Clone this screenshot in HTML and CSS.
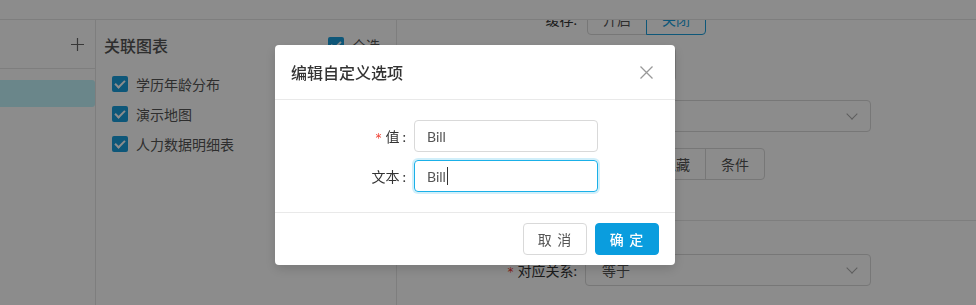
FILE: index.html
```html
<!DOCTYPE html>
<html lang="zh-CN">
<head>
    <meta charset="UTF-8">
    <meta name="viewport" content="width=device-width, initial-scale=1.0">
    <title>编辑自定义选项</title>
    <link rel="stylesheet" href="styles.css">
</head>
<body>
    <div class="app">
        <header class="topbar"></header>

        <div class="main">
            <aside class="side">
                <div class="side-head">
                    <svg class="plus" width="13" height="13" viewBox="0 0 13 13">
                        <path d="M6.5 0v13M0 6.5h13" stroke="#666" stroke-width="1.2" fill="none"/>
                    </svg>
                </div>
                <div class="side-list">
                    <div class="side-item active"></div>
                </div>
            </aside>

            <section class="charts">
                <div class="charts-head">
                    <span class="charts-title">关联图表</span>
                    <label class="check"><span class="box"></span>全选</label>
                </div>
                <ul class="chart-list">
                    <li class="check"><span class="box"></span>学历年龄分布</li>
                    <li class="check"><span class="box"></span>演示地图</li>
                    <li class="check"><span class="box"></span>人力数据明细表</li>
                </ul>
            </section>

            <section class="props">
                <div class="props-inner">
                    <div class="prop-row row-cache">
                        <span class="prop-label">缓存:</span>
                        <div class="btn-group">
                            <span class="seg">开启</span>
                            <span class="seg on">关闭</span>
                        </div>
                    </div>
                    <div class="prop-row row-name">
                        <span class="prop-label"></span>
                        <div class="box-input"></div>
                    </div>
                    <div class="prop-row row-type">
                        <span class="prop-label"></span>
                        <div class="select"><span></span><i class="chev"></i></div>
                    </div>
                    <div class="prop-row row-mode">
                        <span class="prop-label"></span>
                        <div class="btn-group">
                            <span class="seg">显示</span>
                            <span class="seg">隐藏</span>
                            <span class="seg">条件</span>
                        </div>
                    </div>
                    <div class="divider"></div>
                    <div class="prop-row row-rel">
                        <span class="prop-label"><em class="star">*</em>对应关系:</span>
                        <div class="select"><span>等于</span><i class="chev"></i></div>
                    </div>
                </div>
            </section>
        </div>
    </div>

    <div class="mask"></div>

    <div class="modal">
        <div class="modal-head">
            <span class="modal-title">编辑自定义选项</span>
            <svg class="close" width="13" height="13" viewBox="0 0 13 13">
                <path d="M0.5 0.5l12 12M12.5 0.5l-12 12" stroke="#999" stroke-width="1.3" fill="none"/>
            </svg>
        </div>
        <div class="modal-body">
            <div class="form-row">
                <span class="form-label"><em class="star">*</em>值<span class="colon">:</span></span>
                <div class="field">Bill</div>
            </div>
            <div class="form-row">
                <span class="form-label">文本<span class="colon">:</span></span>
                <div class="field focus">Bill<i class="caret"></i></div>
            </div>
        </div>
        <div class="modal-foot">
            <button class="btn">取 消</button>
            <button class="btn primary">确 定</button>
        </div>
    </div>
</body>
</html>
```

FILE: styles.css
```css
* {
    margin: 0;
    padding: 0;
    box-sizing: border-box;
}

body {
    background: #fff;
    font-family: Lato, "Noto Sans CJK SC", sans-serif;
    font-size: 14px;
    color: #333;
    height: 100vh;
    overflow: hidden;
}

ul {
    list-style: none;
}

.app {
    height: 100vh;
    display: flex;
    flex-direction: column;
}

.topbar {
    height: 20px;
    border-bottom: 1px solid #e6e6e6;
    background: #fff;
    flex-shrink: 0;
}

.main {
    flex: 1;
    display: flex;
    min-height: 0;
}

/* Left list */
.side {
    width: 96px;
    border-right: 1px solid #e6e6e6;
    flex-shrink: 0;
}

.side-head {
    height: 49px;
    border-bottom: 1px solid #e6e6e6;
    display: flex;
    align-items: center;
    justify-content: flex-end;
    padding-right: 11px;
}

.side-list {
    padding-top: 11px;
}

.side-item {
    height: 27px;
}

.side-item.active {
    background: #c2f4fb;
    border-radius: 0 3px 3px 0;
}

/* Charts column */
.charts {
    width: 301px;
    border-right: 1px solid #e6e6e6;
    flex-shrink: 0;
}

.charts-head {
    height: 49px;
    display: flex;
    align-items: center;
    justify-content: space-between;
    padding: 0 16px 0 8px;
}

.charts-title {
    font-size: 16px;
    font-weight: 500;
    color: #555;
}

.check {
    display: flex;
    align-items: center;
    gap: 8px;
    color: #555;
}

.box {
    width: 16px;
    height: 16px;
    border-radius: 2px;
    background: #1a9fdc;
    position: relative;
}

.box::after {
    content: "";
    position: absolute;
    left: 5px;
    top: 2px;
    width: 4px;
    height: 8px;
    border: solid #fff;
    border-width: 0 2px 2px 0;
    transform: rotate(45deg);
}

.chart-list {
    padding-left: 16px;
}

.chart-list .check {
    height: 30px;
}

/* Properties panel */
.props {
    flex: 1;
    overflow: hidden;
}

.props-inner {
    margin-top: -17px;
    display: flex;
    flex-direction: column;
}

.prop-row {
    display: grid;
    grid-template-columns: 180px auto;
    gap: 8px;
    align-items: center;
    justify-items: start;
}

.prop-label {
    justify-self: end;
    color: #333;
}

.row-name { margin-top: 12px; }
.row-type { margin-top: 18px; }
.row-mode { margin-top: 16px; }
.row-rel { margin-top: 33px; }

.divider {
    margin-top: 40px;
    border-top: 1px solid #e6e6e6;
}

.star {
    font-style: normal;
    color: #f04134;
    font-family: "DejaVu Sans", sans-serif;
    font-size: 12px;
    margin-right: 4px;
}

.btn-group {
    display: flex;
    margin-left: 2px;
}

.seg {
    width: 60px;
    height: 32px;
    border: 1px solid #d9d9d9;
    margin-left: -1px;
    display: flex;
    align-items: center;
    justify-content: center;
    color: #555;
}

.seg:first-child {
    margin-left: 0;
    border-radius: 4px 0 0 4px;
}

.seg:last-child {
    border-radius: 0 4px 4px 0;
}

.seg.on {
    border-color: #1a9fdc;
    color: #1a9fdc;
    position: relative;
}

.box-input {
    width: 91px;
    height: 35px;
    border: 1px solid #d9d9d9;
    border-radius: 4px;
}

.select {
    width: 286px;
    height: 32px;
    border: 1px solid #d9d9d9;
    border-radius: 4px;
    display: flex;
    align-items: center;
    justify-content: space-between;
    padding: 0 14px 0 16px;
    color: #555;
}

.chev {
    width: 8px;
    height: 8px;
    border: solid #aaa;
    border-width: 0 1px 1px 0;
    transform: rotate(45deg);
    margin-top: -4px;
}

/* Modal */
.mask {
    position: fixed;
    inset: 0;
    background: rgba(0, 0, 0, 0.45);
}

.modal {
    position: fixed;
    left: 275px;
    top: 45px;
    width: 400px;
    background: #fff;
    border-radius: 4px;
    box-shadow: 0 4px 12px rgba(0, 0, 0, 0.15);
}

.modal-head {
    height: 55px;
    border-bottom: 1px solid #e9e9e9;
    display: flex;
    align-items: center;
    justify-content: space-between;
    padding: 0 22px 0 16px;
}

.modal-title {
    font-size: 16px;
    font-weight: 500;
    color: #333;
}

.modal-body {
    padding: 20px 0;
    display: flex;
    flex-direction: column;
    gap: 8px;
}

.form-row {
    display: flex;
    align-items: center;
}

.form-label {
    width: 131px;
    text-align: right;
    margin-right: 8px;
    color: #333;
}

.colon {
    margin-left: 3px;
}

.field {
    width: 184px;
    height: 32px;
    border: 1px solid #d9d9d9;
    border-radius: 4px;
    padding: 0 12px;
    display: flex;
    align-items: center;
    color: #555;
}

.field.focus {
    border-color: #1ab0e8;
    box-shadow: 0 0 0 2px rgba(26, 176, 232, 0.2);
}

.caret {
    width: 1px;
    height: 18px;
    background: #333;
    margin-left: 1px;
}

.modal-foot {
    border-top: 1px solid #e9e9e9;
    padding: 10px 16px;
    display: flex;
    justify-content: flex-end;
    gap: 8px;
}

.btn {
    width: 64px;
    height: 32px;
    border: 1px solid #d9d9d9;
    border-radius: 4px;
    background: #fff;
    color: #555;
    font-family: inherit;
    font-size: 14px;
    letter-spacing: 1px;
}

.btn.primary {
    background: #0a9dde;
    border-color: #0a9dde;
    color: #fff;
    font-weight: 500;
}
```
